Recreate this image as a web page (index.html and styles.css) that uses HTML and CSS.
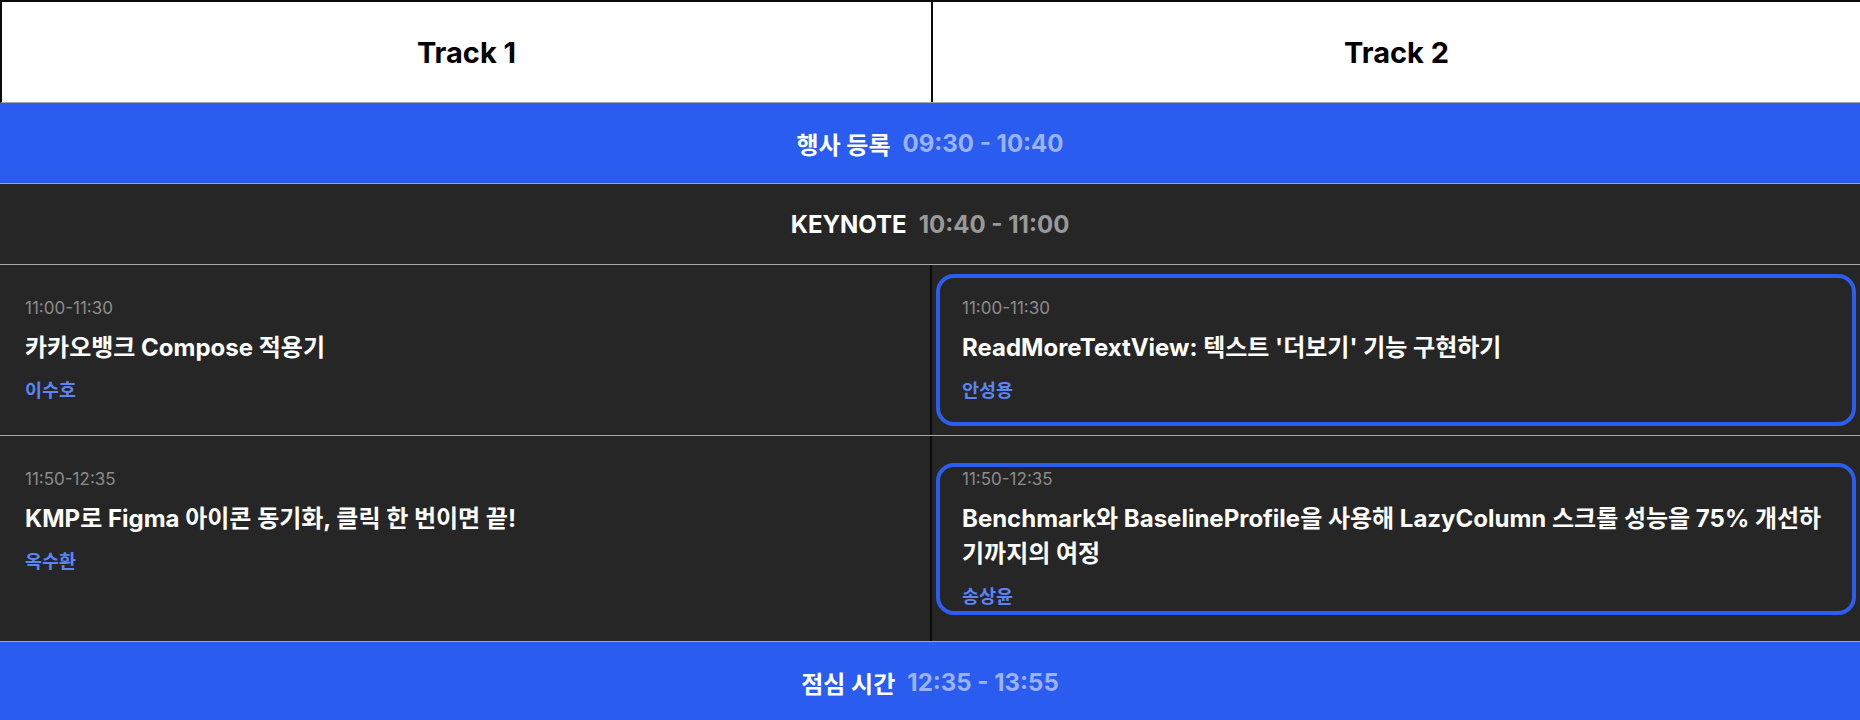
FILE: index.html
```html
<!DOCTYPE html>
<html lang="ko">
<head>
    <meta charset="UTF-8">
    <meta name="viewport" content="width=device-width, initial-scale=1.0">
    <title>Timetable</title>
    <link rel="stylesheet" href="styles.css">
</head>
<body>
    <section class="timetable">
        <div class="track-header">
            <div class="track-name">Track 1</div>
            <div class="track-name">Track 2</div>
        </div>

        <div class="break-row break-blue">
            <span class="break-title">행사 등록</span>
            <span class="break-time">09:30 - 10:40</span>
        </div>

        <div class="break-row break-dark">
            <span class="break-title">KEYNOTE</span>
            <span class="break-time">10:40 - 11:00</span>
        </div>

        <div class="session-row">
            <div class="session">
                <p class="session-time">11:00-11:30</p>
                <h4 class="session-title">카카오뱅크 Compose 적용기</h4>
                <p class="speaker">이수호</p>
            </div>
            <div class="session selected">
                <p class="session-time">11:00-11:30</p>
                <h4 class="session-title">ReadMoreTextView: 텍스트 '더보기' 기능 구현하기</h4>
                <p class="speaker">안성용</p>
            </div>
        </div>

        <div class="session-row">
            <div class="session">
                <p class="session-time">11:50-12:35</p>
                <h4 class="session-title">KMP로 Figma 아이콘 동기화, 클릭 한 번이면 끝!</h4>
                <p class="speaker">옥수환</p>
            </div>
            <div class="session selected">
                <p class="session-time">11:50-12:35</p>
                <h4 class="session-title">Benchmark와 BaselineProfile을 사용해 LazyColumn 스크롤 성능을 75% 개선하기까지의 여정</h4>
                <p class="speaker">송상윤</p>
            </div>
        </div>

        <div class="break-row break-blue">
            <span class="break-title">점심 시간</span>
            <span class="break-time">12:35 - 13:55</span>
        </div>
    </section>
</body>
</html>
```

FILE: styles.css
```css
* {
    margin: 0;
    padding: 0;
    box-sizing: border-box;
    font-family: 'Inter', 'Noto Sans CJK KR', sans-serif;
}

body {
    background-color: #262626;
    color: #fff;
}


/* track header */

.track-header {
    display: grid;
    grid-template-columns: 1fr 1fr;
    height: 103px;
    background-color: #fff;
    border-top: 2px solid #0a0a0a;
    border-left: 2px solid #0a0a0a;
    border-bottom: 1px solid #a8a8a8;
}

.track-name {
    display: flex;
    align-items: center;
    justify-content: center;
    color: #000;
    font-size: 29px;
    font-weight: 700;
}

.track-name + .track-name {
    border-left: 2px solid #0a0a0a;
}


/* breaks */

.break-row {
    display: flex;
    align-items: center;
    justify-content: center;
    height: 81px;
    border-bottom: 1px solid #a8a8a8;
    font-size: 24px;
    font-weight: 700;
}

.break-blue {
    background-color: #2a5cef;
}

.break-dark {
    background-color: #262626;
}

.break-time {
    margin-left: 12px;
    color: rgba(255, 255, 255, .55);
}


/* sessions */

.session-row {
    display: grid;
    grid-template-columns: 1fr 1fr;
    border-bottom: 1px solid #a8a8a8;
}

.session {
    position: relative;
    padding: 33px 30px 34px 25px;
}

.session + .session {
    border-left: 2px solid #0a0a0a;
    padding-left: 30px;
}

.selected::after {
    content: '';
    box-sizing: border-box;
    position: absolute;
    top: 50%;
    left: 4px;
    right: 4px;
    height: 152px;
    transform: translateY(-50%);
    border: 4px solid #2b5ef0;
    border-radius: 18px;
    pointer-events: none;
}

.session-time {
    font-size: 17px;
    line-height: 20px;
    color: #8c8c8c;
    margin-bottom: 12px;
}

.session-title {
    font-size: 24px;
    line-height: 35px;
    font-weight: 700;
    margin-bottom: 14px;
}

.speaker {
    font-size: 18.5px;
    line-height: 22px;
    font-weight: 700;
    color: #5b84f7;
}
```
